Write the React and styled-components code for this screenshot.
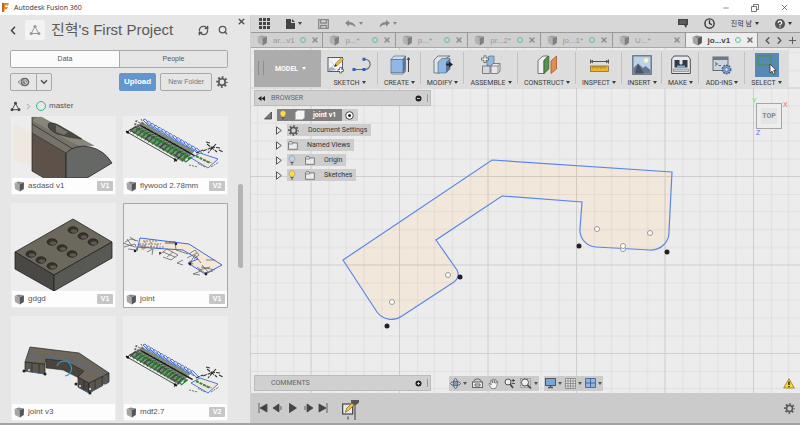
import React from "react";
import styled, { createGlobalStyle, css } from "styled-components";
import {
  RefreshCw,
  Search,
  X,
  ChevronLeft,
  ChevronRight,
  ChevronDown,
  Plus,
  Minus,
  Clock,
} from "lucide-react";

const sans = `"Liberation Sans", "Noto Sans CJK KR", sans-serif`;
const compact = `Roboto, "Noto Sans CJK KR", sans-serif`;

const GlobalStyle = createGlobalStyle`
  * { box-sizing: border-box; }
  body { margin: 0; background: #fff; font-family: ${sans}; font-size: 7px; line-height: 10px; color: #555; }
  button { font: inherit; color: inherit; background: none; border: 0; padding: 0; }
  svg { display: block; flex: none; }
  h1, ul { margin: 0; padding: 0; font-weight: normal; list-style: none; }
`;

/* ---------- frame ---------- */

const Window = styled.div`
  height: 100vh;
  display: flex;
  flex-direction: column;
  border-bottom: 2px solid #a2a2a2;
  overflow: hidden;
`;

const TitleBar = styled.header`
  flex: none;
  height: 15px;
  padding: 0 11px 0 2px;
  display: flex;
  align-items: center;
  gap: 5px;
  background: #fff;
  color: #333;
  font-family: "Open Sans", sans-serif;
`;

const WindowButtons = styled.div`
  margin-left: auto;
  display: flex;
  gap: 21px;
`;

const IconButton = styled.button`
  display: flex;
  align-items: center;
  justify-content: center;
  gap: 3px;
  color: ${(p) => p.$color || "#555"};
`;

const Main = styled.div`
  flex: 1;
  min-height: 0;
  display: flex;
`;

/* ---------- data panel ---------- */

const DataPanel = styled.aside`
  position: relative;
  flex: none;
  width: 251px;
  display: flex;
  flex-direction: column;
  background: #e6e6e6;
  border-right: 1px solid #cfcfcf;
`;

const ClosePanel = styled(IconButton)`
  position: absolute;
  top: 2px;
  right: 4px;
`;

const PanelTop = styled.div`
  flex: none;
  padding: 5px 22px 4px 10px;
  display: flex;
  flex-direction: column;
  gap: 5px;
`;

const ProjectRow = styled.div`
  height: 20px;
  display: flex;
  align-items: center;
  gap: 9px;
`;

const ProjectTile = styled.div`
  width: 20px;
  height: 20px;
  display: grid;
  place-items: center;
  background: #f3f3f3;
  border-radius: 2px;
`;

const ProjectName = styled.h1`
  flex: 1;
  margin-left: -3px;
  font-size: 15px;
  line-height: 20px;
  color: #5a5a5a;
  white-space: nowrap;
`;

const Switcher = styled.div`
  height: 18px;
  margin-top: 5px;
  display: grid;
  grid-template-columns: 1fr 1fr;
  border: 1px solid #a9a9a9;
  border-radius: 2px;
  overflow: hidden;
`;

const SwitchTab = styled.button`
  background: ${(p) => (p.$active ? "#fbfbfb" : "#e6e6e6")};
  & + & {
    border-left: 1px solid #a9a9a9;
  }
`;

const ActionRow = styled.div`
  height: 18px;
  display: flex;
  align-items: stretch;
  gap: 4px;
`;

const SplitButton = styled.div`
  width: 42px;
  margin-right: auto;
  display: grid;
  grid-template-columns: 26fr 16fr;
  border: 1px solid #a9a9a9;
  border-radius: 2px;
  & > button + button {
    border-left: 1px solid #a9a9a9;
  }
`;

const ActionButton = styled.button`
  border-radius: 2px;
  ${(p) =>
    p.$primary
      ? css`
          background: #6496cd;
          color: #fff;
          font-weight: bold;
          font-size: 8px;
          padding: 0 5px;
        `
      : css`
          border: 1px solid #a9a9a9;
          color: #777;
          padding: 0 7px;
        `}
`;

const Breadcrumb = styled.nav`
  height: 12px;
  margin-top: 4px;
  display: flex;
  align-items: center;
  gap: 3px;
  font-size: 8px;
  color: #555;
  a {
    color: inherit;
    text-decoration: none;
  }
`;

const Ring = styled.span`
  width: ${(p) => p.$size}px;
  height: ${(p) => p.$size}px;
  flex: none;
  border: 1px solid ${(p) => p.$color || "#35b896"};
  border-radius: 50%;
`;

const FileArea = styled.div`
  flex: 1;
  min-height: 0;
  padding: 0 6px 2px 11px;
  display: flex;
  justify-content: space-between;
`;

const FileGrid = styled.ul`
  flex: 1;
  margin-right: 10px;
  display: grid;
  grid-template-columns: 1fr 1fr;
  gap: 8px 7px;
  align-content: end;
  overflow: hidden;
`;

const ScrollTrack = styled.div`
  width: 6px;
  padding-top: 68px;
`;

const ScrollThumb = styled.div`
  width: 5px;
  height: 84px;
  border-radius: 3px;
  background: #b3b3b3;
`;

const Card = styled.li`
  background: #ededed;
  box-shadow: ${(p) => (p.$selected ? "inset 0 0 0 1px #85aee2" : "none")};
  border-radius: 1px;
  svg.thumb {
    width: 100%;
    height: 88px;
  }
`;

const CardFooter = styled.div`
  height: 16px;
  margin: 0 1px 1px;
  padding: 0 2px;
  display: flex;
  align-items: center;
  gap: 3px;
  background: #fdfdfd;
`;

const FileName = styled.span`
  flex: 1;
  font-size: 8px;
  white-space: nowrap;
`;

const Version = styled.button`
  width: 16px;
  height: 10px;
  border-radius: 1px;
  background: #c6c6c6;
  color: #fff;
  font-weight: bold;
`;

/* ---------- workspace ---------- */

const Workspace = styled.main`
  flex: 1;
  min-width: 0;
  display: flex;
  flex-direction: column;
  background: #ececec;
`;

const AppBar = styled.div`
  flex: none;
  height: 18px;
  padding: 0 8px;
  display: flex;
  align-items: center;
  gap: 16px;
  background: #d7d7d7;
  border-bottom: 1px solid #9b9b9b;
`;

const Spacer = styled.div`
  flex: 1;
`;

const TabBar = styled.div`
  flex: none;
  height: 15px;
  display: flex;
  background: #d0d0d0;
  border-bottom: 1px solid #a8a8a8;
`;

const DocTab = styled.div`
  flex: 1;
  min-width: 0;
  padding: 0 4px 0 6px;
  display: flex;
  align-items: center;
  gap: 5px;
  border-right: 1px solid #979797;
  font-size: 8px;
  color: ${(p) => (p.$active ? "#444" : "#999")};
  font-weight: ${(p) => (p.$active ? "bold" : "normal")};
  background: ${(p) => (p.$active ? "#ededed" : "transparent")};
  svg:first-child {
    opacity: ${(p) => (p.$active ? 1 : 0.65)};
  }
`;

const TabTitle = styled.button`
  flex: 1;
  height: 13px;
  padding-top: 2px;
  text-align: left;
`;

const TabControls = styled.div`
  width: 42px;
  padding: 0 2px 0 4px;
  display: flex;
  align-items: center;
  justify-content: space-between;
`;

const Viewport = styled.section`
  position: relative;
  flex: 1;
  min-height: 0;
  padding: 2px 0 2px 3px;
  display: flex;
  flex-direction: column;
`;

const Canvas = styled.svg`
  position: absolute;
  inset: 0;
  width: 100%;
  height: 100%;
`;

const Ribbon = styled.div`
  position: relative;
  flex: none;
  height: 38px;
  margin-right: 12px;
  display: grid;
  grid-template-columns: 67fr 57fr 43fr 43fr 54fr 58fr 46fr 40fr 37fr 46fr 43fr;
  background: #dddddd;
`;

const ModelButton = styled.button`
  position: relative;
  display: flex;
  align-items: center;
  justify-content: center;
  gap: 4px;
  margin-bottom: 1px;
  padding-left: 6px;
  background: #acacac;
  color: #fff;
  font-family: ${compact};
  font-weight: bold;
  &::before {
    content: "";
    position: absolute;
    left: 4px;
    top: 11px;
    width: 4px;
    height: 14px;
    border: solid #8d8d8d;
    border-width: 0 1px;
  }
`;

const Tool = styled.div`
  display: flex;
  flex-direction: column;
  align-items: center;
  padding-top: 3px;
  background: linear-gradient(#c2c2c2, #c2c2c2) right 2px / 1px 32px no-repeat;
  &:last-child {
    background: none;
  }
`;

const ToolIcons = styled.div`
  height: 24px;
  display: flex;
  align-items: center;
  gap: 7px;
  ${(p) => p.$active && "background: #5689b3;"}
`;

const ToolLabel = styled.button`
  display: flex;
  align-items: center;
  gap: 2px;
  height: 11px;
  font-family: ${compact};
  color: #3c3c3c;
`;

const Caret = styled.i`
  flex: none;
  border: 2px solid transparent;
  border-top: 3px solid currentColor;
  border-bottom: 0;
`;

const Stage = styled.div`
  position: relative;
  flex: 1;
  min-height: 0;
  margin-top: 2px;
  display: flex;
  justify-content: space-between;
  align-items: flex-start;
`;

const PanelBar = styled.div`
  width: 177px;
  height: 16px;
  padding: 0 2px 0 3px;
  display: flex;
  align-items: center;
  gap: 6px;
  background: #d0d0d0;
  border: 1px solid #bcbcbc;
  color: #666;
  font-family: ${compact};
  &::after {
    content: "";
    width: 2px;
    height: 8px;
    margin-left: -3px;
    border-right: 1px solid #999;
  }
`;

const PanelTitle = styled.span`
  flex: 1;
  padding-left: ${(p) => p.$indent || 0}px;
`;

const Tree = styled.ul`
  padding: 3px 0 0 10px;
  display: flex;
  flex-direction: column;
  gap: 3px;
  font-family: ${compact};
  color: #333;
`;

const TreeRow = styled.li`
  height: 12px;
  padding-left: ${(p) => (p.$root ? 0 : 11)}px;
  display: flex;
  align-items: center;
  gap: ${(p) => (p.$root ? 5 : 4)}px;
`;

const Chip = styled.div`
  height: 12px;
  display: flex;
  align-items: center;
  gap: 9px;
  padding: 0 4px 0 1px;
  background: #cdcdcd;
`;

const RootChip = styled(Chip)`
  gap: 3px;
  padding: 0 4px 0 0;
  & > div {
    height: 12px;
    padding: 0 6px 0 2px;
    display: flex;
    align-items: center;
    gap: 8px;
    background: #808080;
    color: #fff;
    font-weight: bold;
  }
`;

const CubeHolder = styled.div`
  position: relative;
  margin: 13px 18px 0 0;
`;

const Cube = styled.button`
  width: 26px;
  height: 26px;
  padding: 4px;
  border: 1px solid #a6a6a6;
  background: #e3e4e6;
  background-clip: content-box;
  box-shadow: inset 0 0 0 4px #ededed;
  color: #888;
  font-family: ${compact};
  line-height: 16px;
  font-weight: bold;
`;

const Axis = styled.span`
  position: absolute;
  color: ${(p) => p.$color};
  left: ${(p) => p.$x}px;
  top: ${(p) => p.$y}px;
`;

const BottomRow = styled.div`
  position: relative;
  flex: none;
  display: flex;
  align-items: center;
`;

const NavBar = styled.div`
  margin-left: ${(p) => p.$gap}px;
  height: 15px;
  padding: 0 1px;
  display: flex;
  align-items: center;
  gap: ${(p) => p.$between}px;
  background: #cbcbcb;
  button {
    gap: 2px;
  }
`;

const Warning = styled.div`
  margin: 0 5px 0 auto;
`;

const Timeline = styled.footer`
  flex: none;
  height: 30px;
  padding: 0 5px 0 7px;
  display: flex;
  align-items: center;
  gap: 5px;
  background: #cbcbcb;
`;

const Marker = styled.div`
  margin-left: 9px;
  margin-top: 4px;
`;

/* ---------- drawings ---------- */

const BoxIcon = () => (
  <svg width="11" height="11" viewBox="0 0 11 11">
    <path d="M0.5 2 4.5 0.5 10 1.5 5.5 3.2Z" fill="#8b8b8b" />
    <path d="M0.5 2 5.5 3.2 5.8 10.5 1 8Z" fill="#a5a5a5" />
    <path d="M5.5 3.2 10 1.5 9.8 8 5.8 10.5Z" fill="#555" />
  </svg>
);

const Gear = ({ size = 11, color = "#555" }) => (
  <svg width={size} height={size} viewBox="0 0 12 12" fill="none" stroke={color}>
    <circle cx="6" cy="6" r="4.9" strokeWidth="1.8" strokeDasharray="1.9 1.95" strokeDashoffset=".95" />
    <circle cx="6" cy="6" r="3.2" strokeWidth="1.6" />
  </svg>
);

const Nodes = ({ color = "#999", size = 12 }) => (
  <svg width={size} height={size} viewBox="0 0 12 12" fill={color}>
    <path d="M6 2.5 2.2 9.5H9.8Z" fill="none" stroke={color} strokeWidth="1" />
    <circle cx="6" cy="2.5" r="1.6" />
    <circle cx="2.2" cy="9.5" r="1.6" />
    <circle cx="9.8" cy="9.5" r="1.6" />
  </svg>
);

const Logo = () => (
  <svg width="7" height="9" viewBox="0 0 7 9">
    <path d="M0 0H7L6 2.5H3V4H6L5 6H3L2 9H0Z" fill="#f08a24" />
    <path d="M0 0H2L1.5 9H0Z" fill="#b4621b" />
  </svg>
);

const Bulb = ({ color }) => (
  <svg width="8" height="10" viewBox="0 0 8 10">
    <path d="M4 .5a3 3 0 0 1 1.7 5.4L5.5 7h-3l-.2-1.1A3 3 0 0 1 4 .5Z" fill={color} stroke="#8b8468" strokeWidth=".5" />
    <path d="M2.7 7.5h2.6M3 9h2" stroke="#555" />
  </svg>
);

const Folder = () => (
  <svg width="10" height="9" viewBox="0 0 10 9">
    <path d="M.5 8.3V1.8L1.2.7H4l.8 1.2h4.6v6.4Z" fill="#e9ebef" stroke="#666" strokeWidth=".8" />
    <path d="M.5 3H4.6L5.2 1.9" fill="none" stroke="#666" strokeWidth=".7" />
  </svg>
);

const Arrow = ({ open }) => (
  <svg width="8" height="9" viewBox="0 0 8 9">
    {open ? (
      <path d="M7.5 1V8H.5Z" fill="#777" stroke="#444" strokeWidth=".8" />
    ) : (
      <path d="M1.5 .8 6.3 4.5 1.5 8.2Z" fill="#eee" stroke="#555" />
    )}
  </svg>
);

const Dot = ({ plus }) => (
  <svg width="7" height="7" viewBox="0 0 7 7">
    <circle cx="3.5" cy="3.5" r="3" fill="#222" />
    <path d={plus ? "M2 3.5h3M3.5 2v3" : "M2 3.5h3"} stroke="#ddd" strokeWidth=".9" />
  </svg>
);

const SketchIcon = () => (
  <svg width="18" height="18" viewBox="0 0 18 18">
    <rect x="1" y="1.5" width="14.5" height="14" fill="#f1f3f7" stroke="#555a66" />
    <path d="M2 12q4-2 7 2L2 15Z" fill="#9fb2cc" />
    <path d="M3 4.5 7 9M3 12.5 7 9" stroke="#bbb" strokeWidth=".6" />
    <path d="M7.5 10.5 8.5 7.8 14.6 1.4 16.5 3.2 10.2 9.5Z" fill="#f3c23c" stroke="#7c5a22" strokeWidth=".6" />
    <path d="M7.3 10.7 8.4 8l1.7 1.7Z" fill="#333" />
    <path d="M13.7 11.3v6M10.7 14.3h6" stroke="#555" strokeWidth="2.8" />
    <path d="M13.7 12v4.6M11.4 14.3H16" stroke="#fff" strokeWidth="1.3" />
  </svg>
);

const CurveIcon = () => (
  <svg width="20" height="18" viewBox="0 0 20 18">
    <path d="M2 13.5H13A5 5 0 0 0 13 3.2" fill="none" stroke="#666" strokeWidth="1.1" />
    <path d="M.5 12h3v3h-3zM10.5 12h3v3h-3zM10.5 1.7h3v3h-3z" fill="#2d5fb5" />
  </svg>
);

const CreateIcon = () => (
  <svg width="20" height="20" viewBox="0 0 20 20">
    <path d="M1 4.5 4 1H15.5L13 4.5Z" fill="#c9def2" stroke="#58708c" strokeWidth=".7" />
    <path d="M13 4.5 15.5 1V15L13 18Z" fill="#55779f" stroke="#58708c" strokeWidth=".7" />
    <rect x="1" y="4.5" width="12" height="13" fill="#8fb9e2" stroke="#58708c" strokeWidth=".7" />
    <path d="M.8 17.5 1.8 19H13L16 16" fill="none" stroke="#888" />
    <path d="M18.5 17V3M17 5 18.5 2.6 20 5" fill="none" stroke="#444" />
  </svg>
);

const ModifyIcon = () => (
  <svg width="20" height="20" viewBox="0 0 20 20">
    <path d="M1 18V5L5 1H17L12.5 3.5 7 7V18Z" fill="#e1e3e6" stroke="#59616c" strokeWidth=".8" />
    <path d="M5 18V7L9 3.5H17V14L13 18Z" fill="#8fb9e2" stroke="#58708c" strokeWidth=".7" />
    <path d="M13 18V7L17 3.5V14Z" fill="#55779f" />
    <path d="M13 9.5H17" stroke="#222" strokeWidth="1.8" />
    <path d="M16 6.5 20 9.5 16 12.5Z" fill="#222" />
  </svg>
);

const AssembleIcon = () => (
  <svg width="20" height="20" viewBox="0 0 20 20">
    <path d="M6 3.5 8 1H13V9L11 11H6Z" fill="#8fb9e2" stroke="#58708c" strokeWidth=".7" />
    <path d="M1.5 11H9V18.5H1.5Z" fill="#d5d8dd" stroke="#666" strokeWidth=".8" />
    <path d="M10 11 12 8.5H19V16L17 18.5H10Z" fill="#e5e7ea" stroke="#666" strokeWidth=".8" />
    <path d="M17 11V18M10 11H17L19 8.5" fill="none" stroke="#777" strokeWidth=".8" />
    <path d="M4 .5V8M.3 4.2H7.8" stroke="#555" strokeWidth="2.8" />
    <path d="M4 1.3V7.2M1 4.2H7" stroke="#fff" strokeWidth="1.3" />
  </svg>
);

const ConstructIcon = () => (
  <svg width="21" height="20" viewBox="0 0 21 20">
    <path d="M1 5.5 6 1H11L7 5.5V18.5H1Z" fill="#eef0f2" stroke="#555" strokeWidth=".8" />
    <path d="M7 5.5 11.8 1V14L7 18.5Z" fill="#57924f" stroke="#3d5e38" strokeWidth=".8" />
    <path d="M14 6 19.5 1V14L14 18.5Z" fill="#e58b50" stroke="#a05c30" strokeWidth=".8" />
  </svg>
);

const InspectIcon = () => (
  <svg width="19" height="13" viewBox="0 0 19 13">
    <path d="M.5 .5V4.5M18.5 .5V4.5M1 2.5H18M3 1 1 2.5 3 4M16 1 18 2.5 16 4" fill="none" stroke="#555" />
    <rect x=".5" y="7" width="18" height="5.5" fill="#edb62d" stroke="#8b702e" strokeWidth=".8" />
    <path d="M3 7v3M5 7v2M7 7v3M9 7v2M11 7v3M13 7v2M15 7v3" stroke="#7d6428" strokeWidth=".6" />
  </svg>
);

const InsertIcon = () => (
  <svg width="20" height="20" viewBox="0 0 20 20">
    <rect x=".8" y=".8" width="18.4" height="18.4" fill="#b9d3ec" stroke="#5b6573" strokeWidth="1.2" />
    <circle cx="14" cy="5.5" r="2.2" fill="#fff5b8" />
    <path d="M1.5 18.5V13L6 8.5 11 13 13.5 11 18.5 15V18.5Z" fill="#66778b" />
    <path d="M6 8.5 12 18.5H3Z" fill="#465668" />
  </svg>
);

const MakeIcon = () => (
  <svg width="20" height="20" viewBox="0 0 20 20">
    <path d="M3 1H17L19.3 4V18.5H.7V4Z" fill="#e7e9ec" stroke="#4c5158" />
    <path d="M3.5 5H16.5V12.5H3.5Z" fill="#343a42" />
    <path d="M8.5 5H11.5V8.5L10 10 8.500 8.500Z" fill="#d5e4f5" />
    <path d="M2.5 14H17.5V16.500H2.5Z" fill="#c5c9ce" stroke="#777" strokeWidth=".6" />
    <path d="M6 10.5H14V12.5H6Z" fill="#7dabe0" />
  </svg>
);

const AddInsIcon = () => (
  <svg width="20" height="20" viewBox="0 0 20 20">
    <rect x="1" y="2" width="15" height="13.5" fill="#cdd4dd" stroke="#626b78" />
    <path d="M1 2H16V5H1Z" fill="#6e7887" />
    <path d="M3 7.5 5.5 9 3 10.5M6.5 10.5H9" fill="none" stroke="#444" strokeWidth=".8" />
    <circle cx="14.5" cy="14.5" r="4.2" fill="#7d9fce" stroke="#415b85" strokeWidth="1.5" strokeDasharray="1.7 1" />
    <circle cx="14.5" cy="14.5" r="1.7" fill="#e3e8f0" stroke="#415b85" strokeWidth=".6" />
  </svg>
);

const SelectIcon = () => (
  <svg width="24" height="24" viewBox="0 0 24 24">
    <rect x="3" y="3" width="13" height="9" fill="none" stroke="#49913d" />
    <path d="M15 11V20L17 18.2 18.3 21.3 20 20.5 18.7 17.5H21.2Z" fill="#fff" stroke="#333" strokeWidth=".8" />
  </svg>
);

/* file thumbnails */

const Thumb = ({ children }) => (
  <svg className="thumb" viewBox="0 0 105 88">
    {children}
  </svg>
);

const Wedge = () => (
  <Thumb>
    <path d="M3 33 21 43V76L3 70Z" fill="#efe8e0" />
    <path d="M21 43 55 63V88H33L21 81Z" fill="#5d5149" />
    <path d="M21 43V27Q26 26 31 28L83 56 Q66 54 55 63Z" fill="#77736a" />
    <path d="M21 34 62 59M21 43 55 63V88M21 27V81L33 88" fill="none" stroke="#222" strokeWidth=".7" />
    <path d="M31 27 84 56Q76 54 68 56L22 31Q25 26 31 27Z" fill="#89857a" />
    <path d="M38 33Q43 32 51 37 62 43 71 49 58 48 46 44 34 38 38 33Z" fill="#4a4844" stroke="#222" strokeWidth=".5" />
    <path d="M45 35 57 42 53 45 45 42Z" fill="#77736a" />
    <path d="M55 63Q64 54 79 57 93 60 101 73L76 88H55Z" fill="#666865" stroke="#222" strokeWidth=".8" />
  </Thumb>
);

const holes = [
  [62, 27], [72, 33], [82, 39],
  [41, 39], [51, 45], [61, 51],
  [20, 51], [30, 57], [41, 63],
];

const Block = () => (
  <Thumb>
    <path d="M62 16 101 39 43 72 4 49Z" fill="#6c685d" stroke="#222" strokeWidth=".8" />
    <path d="M4 49 43 72V88L4 66Z" fill="#4a4844" stroke="#222" strokeWidth=".8" />
    <path d="M101 39V55L43 88V72Z" fill="#585955" stroke="#222" strokeWidth=".8" />
    {holes.map(([x, y]) => (
      <g key={`${x}-${y}`}>
        <ellipse cx={x} cy={y} rx="5" ry="3.2" fill="#36332e" stroke="#1e1d1b" strokeWidth=".7" />
        <ellipse cx={x + 1} cy={y + 1} rx="3.2" ry="1.8" fill="#5c5950" />
      </g>
    ))}
  </Thumb>
);

const JointSketch = () => (
  <Thumb>
    <path d="M17 35 66 41 99 62 83 70 66 60 75 56 60 48 14 48Z" fill="#f3e7d8" />
    <path d="M14 48 17 35 66 41 99 62 82 71 65 60 75 56 60 47 14 44" fill="none" stroke="#3c6bdc" strokeWidth="1" />
    <g fill="none" stroke="#666" strokeWidth=".8">
      <path d="M16 41H38M18 44H42M20 38H34M22 38V46M28 39V46M34 41V47" strokeDasharray="2 1" />
      <path d="M2 39 8 36 15 38M1 44 12 41 14 47 5 46M4 36 9 43M7 34 13 38M0 40 12 44" />
      <path d="M24 49 30 46 29 52M36 52 44 46 55 52 48 57 40 54M40 49 52 54M44 54 50 49" />
      <path d="M60 57 54 60 60 62M52 39 53 47 65 51M46 39H53" />
      <path d="M66 51 72 47 76 52 71 56M67 60 72 52 78 60M83 57H92M74 64 82 70 90 68M64 55 74 50" />
      <path d="M70 71 77 72M70 71 78 68M76 67 87 64M78 64 92 67M79 62 86 70" />
    </g>
    <path d="M42 38H52V41H42ZM66 57 71 61 67 62ZM14 41 24 43 20 47Z" fill="#777" opacity=".6" />
    <g fill="#222">
      <circle cx="12" cy="48" r="1.3" />
      <circle cx="53" cy="41" r="1.2" />
      <circle cx="37" cy="50" r="1" />
      <circle cx="67" cy="61" r="1.4" />
      <circle cx="83" cy="71" r="1.4" />
    </g>
  </Thumb>
);

const JointSolid = () => (
  <Thumb>
    <path d="M35 43 54 45 73 55 68 62 52 54 35 52Z" fill="#4a443d" stroke="#222" strokeWidth=".5" />
    <path d="M14 46 34 48V58L14 55Z" fill="#5b564e" stroke="#222" strokeWidth=".7" />
    <path d="M67 61 78 67V77L67 71Z" fill="#4c4741" stroke="#222" strokeWidth=".7" />
    <path d="M78 67 98 57V66L78 77Z" fill="#5b564e" stroke="#222" strokeWidth=".7" />
    <path d="M19 31 68 37 98 57 78 67 67 61 73 55 54 45 35 43 34 48 14 46Z" fill="#6d675c" stroke="#222" strokeWidth=".7" />
    <path d="M14 46 17 40 64 45 96 61M14 55 34 58M67 71 78 77 98 66" fill="none" stroke="#506b9c" strokeWidth=".8" />
    <path d="M21 47V56M28 48V57M84 64V73M91 61V69M73 65V74" stroke="#292622" strokeWidth=".7" />
    <g fill="#222">
      <circle cx="13" cy="55" r="1.5" />
      <circle cx="34" cy="58" r="1.5" />
      <circle cx="65" cy="68" r="1.5" />
      <circle cx="79" cy="77" r="1.5" />
    </g>
    <g fill="#ddd">
      <circle cx="18" cy="54" r="1" />
      <circle cx="69" cy="70" r="1" />
      <circle cx="79" cy="73" r="1" />
      <circle cx="93" cy="69" r="1" />
    </g>
    <path d="M46 50A7.5 7.5 0 1 1 54 60" fill="none" stroke="#1f9fd0" strokeWidth="1.2" />
  </Thumb>
);

const bars = Array.from({ length: 15 }, (_, i) => i);

const Plywood = ({ step = 3.4, top = 28 }) => {
  const rise = step * 0.56;
  const run = step * 14;
  const fall = rise * 14;
  return (
    <Thumb>
      <path
        d={`M6 ${top + 11} 19 ${top + 3} ${20 + run} ${top + 3 + fall} ${8 + run} ${top + 14 + fall}Z`}
        fill="#7f8f7c"
      />
      {bars.map((i) => (
        <g key={i} transform={`translate(${i * step} ${top + i * rise})`} fill="none">
          <path d="M8 11l4-3 4 2-5 4z" stroke={i % 4 ? "#2c8436" : "#444"} strokeWidth="1.2" />
          <path d="M16 7l-4 1M7 13l7-6" stroke="#444" strokeWidth=".9" strokeDasharray="2 1" />
          <path d="M20 1l2-1 6 6-2 1z" fill="#ece6e0" stroke="#3566dd" strokeWidth=".9" />
          <path d="M17 6l5 3" stroke="#1c1c1c" strokeWidth="1.3" />
          <path d="M13 11l4-2" stroke="#1f7a2a" strokeWidth="1.5" />
        </g>
      ))}
      <path d={`M4 ${top + 13} 53 ${top + 41}M3 ${top + 14}l5-4M51 ${top + 43}l6-5`} stroke="#222" strokeWidth=".8" />
      <path d={`M3 ${top + 12}l3 1-1 1.5zM54 ${top + 42}l-3-1 1-1.5z`} fill="#111" stroke="#111" />
      <path d={`M77 ${top + 34} 95 ${top + 40} 85 ${top + 49} 68 ${top + 39}Z`} fill="#efe6dc" stroke="#3c6bdc" strokeWidth=".9" />
      <path d={`M73 ${top + 37}l14 7`} stroke="#2e8b38" strokeWidth="2" strokeDasharray="3 1" />
      <path d={`M82 ${top + 48}l-8-4M66 ${top + 46}l9 2M88 ${top + 48}l8-5M80 ${top + 41}l9 3`} stroke="#666" strokeWidth=".9" strokeDasharray="2 1" />
      <path
        d={`M80 ${top + 32}l10-4M84 ${top + 25}l10 8M93 ${top + 25}l-8 9M97 ${top + 29}l-9-1M73 ${top + 34}l7-3M96 ${top + 31}l4 2M83 ${top + 23}l4 1`}
        stroke="#333"
        strokeWidth="1.1"
        strokeDasharray="4 1"
      />
      <path d={`M12 ${top + 2}l9 3M11 ${top + 5}l7 2M18 ${top}l3 6M14 ${top + 1}l-2 6`} stroke="#555" strokeWidth=".9" strokeDasharray="2 1" />
    </Thumb>
  );
};

const files = [
  { name: "asdasd v1", version: "V1", art: <Wedge /> },
  { name: "flywood 2.78mm", version: "V2", art: <Plywood step={3.7} top={29} /> },
  { name: "gdgd", version: "V1", art: <Block /> },
  { name: "joint", version: "V1", art: <JointSketch />, selected: true },
  { name: "joint v3", art: <JointSolid /> },
  { name: "mdf2.7", version: "V2", art: <Plywood /> },
];

const docs = [
  { title: "ar...v1", ring: true },
  { title: "p...*", ring: true },
  { title: "p...*", ring: true },
  { title: "pr...2*", ring: true },
  { title: "jo...1*", ring: true },
  { title: "U...*" },
  { title: "jo...v1", ring: true, active: true },
];

const tools = [
  { label: "SKETCH", icon: <><SketchIcon /><CurveIcon /></> },
  { label: "CREATE", icon: <CreateIcon /> },
  { label: "MODIFY", icon: <ModifyIcon /> },
  { label: "ASSEMBLE", icon: <AssembleIcon /> },
  { label: "CONSTRUCT", icon: <ConstructIcon /> },
  { label: "INSPECT", icon: <InspectIcon /> },
  { label: "INSERT", icon: <InsertIcon /> },
  { label: "MAKE", icon: <MakeIcon /> },
  { label: "ADD-INS", icon: <AddInsIcon /> },
  { label: "SELECT", icon: <SelectIcon />, active: true },
];

const tree = [
  { label: "Document Settings", icons: <Gear /> },
  { label: "Named Views", icons: <Folder /> },
  { label: "Origin", icons: <><Bulb color="#b9d2f5" /><Folder /></> },
  { label: "Sketches", icons: <><Bulb color="#ffd94a" /><Folder /></> },
];

const playback = [
  ["First", "M1 0V10M9 1V9L2 5Z"],
  ["Step back", "M6 1V9L0 5ZM8 3V7"],
  ["Play", "M1.5 .5V9.5L8.5 5Z"],
  ["Step forward", "M4 1V9L10 5ZM2 3V7"],
  ["Last", "M9 0V10M1 1V9L8 5Z"],
];

const openPoints = [[141, 254], [197, 227], [346, 181], [399, 185], [372, 201], [372, 198]];
const solidPoints = [[209, 229], [136, 278], [328, 198], [416, 204]];
const minorLines = [18, 35, 53, 71];

const profile =
  "M92 212 241 112 421 124 418 183A18 18 0 0 1 399 202L345 199A17 17 0 0 1 329 181L331 154 251 148 185 192 206 222A9 9 0 0 1 203 234L151 268A18 18 0 0 1 126 264Z";

const SketchCanvas = () => (
  <Canvas aria-label="Sketch canvas">
    <defs>
      <pattern id="grid" x="59.5" y="39.5" width="88.5" height="88.5" patternUnits="userSpaceOnUse">
        {minorLines.map((n) => (
          <path key={n} d={`M${n}.5 0V88.5M0 ${n}.5H88.5`} stroke="#000" strokeOpacity=".05" />
        ))}
        <path d="M.5 0V88.5M0 .5H88.5" stroke="#000" strokeOpacity=".13" />
      </pattern>
    </defs>
    <path d={profile} fill="#f1e7db" />
    <rect width="100%" height="100%" fill="url(#grid)" />
    <path d={profile} fill="none" stroke="#5b87ea" strokeWidth="1.2" />
    {openPoints.map(([x, y]) => (
      <circle key={`${x}-${y}`} cx={x} cy={y} r="2.5" fill="#fff" stroke="#999" />
    ))}
    {solidPoints.map(([x, y]) => (
      <circle key={`${x}-${y}`} cx={x} cy={y} r="2.5" fill="#222" />
    ))}
  </Canvas>
);

export default function App() {
  return (
    <Window>
      <GlobalStyle />
      <TitleBar>
        <Logo />
        Autodesk Fusion 360
        <WindowButtons>
          <IconButton aria-label="Minimize"><Minus size={8} /></IconButton>
          <IconButton aria-label="Restore">
            <svg width="8" height="8" viewBox="0 0 8 8"><path d="M.5 2.5H5.5V7.5H.5ZM2.5 2.500V.5H7.5V5.5H5.500" fill="none" stroke="#555" strokeWidth=".8" /></svg>
          </IconButton>
          <IconButton aria-label="Close"><X size={9} /></IconButton>
        </WindowButtons>
      </TitleBar>
      <Main>
        <DataPanel>
          <ClosePanel aria-label="Close panel"><X size={9} strokeWidth={4} /></ClosePanel>
          <PanelTop>
            <ProjectRow>
              <IconButton aria-label="Back">
                <svg width="6" height="9" viewBox="0 0 6 9"><path d="M5 .8 1.5 4.5 5 8.2" fill="none" stroke="#444" strokeWidth="1.5" /></svg>
              </IconButton>
              <ProjectTile><Nodes /></ProjectTile>
              <ProjectName>진혁's First Project</ProjectName>
              <IconButton aria-label="Refresh"><RefreshCw size={11} strokeWidth={3} /></IconButton>
              <IconButton aria-label="Search"><Search size={10} strokeWidth={3} /></IconButton>
            </ProjectRow>
            <Switcher>
              <SwitchTab $active>Data</SwitchTab>
              <SwitchTab>People</SwitchTab>
            </Switcher>
            <ActionRow>
              <SplitButton>
                <IconButton aria-label="Versions">
                  <svg width="13" height="10" viewBox="0 0 13 10">
                    <path d="M6 1 1 5 6 9" fill="none" stroke="#888" strokeWidth="1" />
                    <circle cx="8" cy="5" r="4.3" fill="#666" />
                    <circle cx="8" cy="5" r="2.5" fill="none" stroke="#ddd" strokeWidth=".8" />
                    <path d="M8 3V5.5L10 6" fill="none" stroke="#fff" strokeWidth=".9" />
                  </svg>
                </IconButton>
                <IconButton aria-label="More views"><ChevronDown size={10} strokeWidth={4} /></IconButton>
              </SplitButton>
              <ActionButton $primary>Upload</ActionButton>
              <ActionButton>New Folder</ActionButton>
              <IconButton aria-label="Panel settings"><Gear size={12} /></IconButton>
            </ActionRow>
            <Breadcrumb>
              <Nodes color="#444" size={11} />
              <ChevronRight size={9} strokeWidth={3} color="#bbb" />
              <Ring $size={10} />
              <a href="#master">master</a>
            </Breadcrumb>
          </PanelTop>
          <FileArea>
            <FileGrid>
              {files.map((f) => (
                <Card key={f.name} $selected={f.selected}>
                  {f.art}
                  <CardFooter>
                    <BoxIcon />
                    <FileName>{f.name}</FileName>
                    {f.version && <Version>{f.version}</Version>}
                  </CardFooter>
                </Card>
              ))}
            </FileGrid>
            <ScrollTrack><ScrollThumb /></ScrollTrack>
          </FileArea>
        </DataPanel>

        <Workspace>
          <AppBar>
            <IconButton aria-label="Show data panel">
              <svg width="11" height="11" viewBox="0 0 11 11" fill="#444">
                {[0, 4, 8].map((y) => [0, 4, 8].map((x) => <rect key={`${x}${y}`} x={x} y={y} width="3" height="3" />))}
              </svg>
            </IconButton>
            <IconButton aria-label="File" $color="#444">
              <svg width="9" height="10" viewBox="0 0 9 10"><path d="M0 0H5V4H9V10H0ZM6 0 9 3H6Z" fill="#444" /></svg>
              <Caret />
            </IconButton>
            <IconButton aria-label="Save">
              <svg width="11" height="10" viewBox="0 0 11 10"><path d="M.7.7H10.3V9.3H.7ZM2.7.7V4H8.3V.7M2.7 9.3V6.5H8.3V9.3" fill="none" stroke="#888" strokeWidth="1.3" /></svg>
            </IconButton>
            <IconButton aria-label="Undo" $color="#888">
              <svg width="11" height="8" viewBox="0 0 11 8"><path d="M0 3 4 0V2Q10 2 10.5 7.5 8 4.5 4 4.5V6.5Z" fill="#888" /></svg>
              <Caret />
            </IconButton>
            <IconButton aria-label="Redo" $color="#888">
              <svg width="11" height="8" viewBox="0 0 11 8"><path d="M11 3 7 0V2Q1 2 .5 7.5 3 4.5 7 4.5V6.5Z" fill="#888" /></svg>
              <Caret />
            </IconButton>
            <Spacer />
            <IconButton aria-label="Comments">
              <svg width="10" height="9" viewBox="0 0 10 9"><path d="M0 0H10V6H9L8 9 6 6H0Z" fill="#444" /><path d="M1.5 2H8.5M1.5 4H8.5" stroke="#999" strokeWidth=".6" /></svg>
            </IconButton>
            <IconButton aria-label="Job status" $color="#333"><Clock size={11} strokeWidth={3} /></IconButton>
            <IconButton $color="#333">진혁 남 <Caret /></IconButton>
            <IconButton aria-label="Help" $color="#333">
              <svg width="10" height="10" viewBox="0 0 10 10">
                <circle cx="5" cy="5" r="5" fill="#555" />
                <path d="M3.3 4A1.7 1.7 0 1 1 5 5.5V6.5M5 7.3V8.5" fill="none" stroke="#fff" strokeWidth="1.1" />
              </svg>
              <Caret />
            </IconButton>
          </AppBar>
          <TabBar>
            {docs.map((d, i) => (
              <DocTab key={i} $active={d.active}>
                <BoxIcon />
                <TabTitle>{d.title}</TabTitle>
                {d.ring && <Ring $size={6} $color="#5cc2a8" />}
                <IconButton aria-label="Close tab" $color="#666"><X size={8} strokeWidth={4} /></IconButton>
              </DocTab>
            ))}
            <TabControls>
              <IconButton aria-label="Previous tab"><ChevronLeft size={11} strokeWidth={3} /></IconButton>
              <IconButton aria-label="Next tab"><ChevronRight size={11} strokeWidth={3} /></IconButton>
              <IconButton aria-label="New tab"><Plus size={11} strokeWidth={2} /></IconButton>
            </TabControls>
          </TabBar>

          <Viewport>
            <SketchCanvas />
            <Ribbon>
              <ModelButton>MODEL <Caret /></ModelButton>
              {tools.map((t) => (
                <Tool key={t.label}>
                  <ToolIcons $active={t.active}>{t.icon}</ToolIcons>
                  <ToolLabel>{t.label} <Caret /></ToolLabel>
                </Tool>
              ))}
            </Ribbon>
            <Stage>
              <div>
                <PanelBar>
                  <svg width="7" height="5" viewBox="0 0 7 5"><path d="M3.5 0V5L0 2.5ZM7 0V5L3.5 2.5Z" fill="#222" /></svg>
                  <PanelTitle>BROWSER</PanelTitle>
                  <IconButton aria-label="Collapse browser"><Dot /></IconButton>
                </PanelBar>
                <Tree>
                  <TreeRow $root>
                    <Arrow open />
                    <RootChip>
                      <div>
                        <Bulb color="#ffd94a" />
                        <svg width="10" height="10" viewBox="0 0 10 10"><path d="M.5 2.5 2.5.5H9.5V7.5L7.5 9.5H.5Z" fill="#f4f4f4" stroke="#bbb" strokeWidth=".6" /></svg>
                        joint v1
                      </div>
                      <svg width="9" height="9" viewBox="0 0 9 9"><circle cx="4.5" cy="4.5" r="3.8" fill="#fff" stroke="#333" strokeWidth=".9" /><circle cx="4.5" cy="4.5" r="1.5" fill="#222" /></svg>
                    </RootChip>
                  </TreeRow>
                  {tree.map((t) => (
                    <TreeRow key={t.label}>
                      <Arrow />
                      <Chip>{t.icons}{t.label}</Chip>
                    </TreeRow>
                  ))}
                </Tree>
              </div>
              <CubeHolder>
                <Cube>TOP</Cube>
                <Axis $color="#6be06b" $x={-4} $y={-7}>Y</Axis>
                <Axis $color="#e86a6a" $x={27} $y={-3}>X</Axis>
                <Axis $color="#6a6af0" $x={0} $y={25}>Z</Axis>
              </CubeHolder>
            </Stage>
            <BottomRow>
              <PanelBar>
                <PanelTitle $indent={13}>COMMENTS</PanelTitle>
                <IconButton aria-label="Add comment"><Dot plus /></IconButton>
              </PanelBar>
              <NavBar $gap={18} $between={5}>
                <IconButton aria-label="Orbit">
                  <svg width="11" height="11" viewBox="0 0 11 11" fill="none" stroke="#555" strokeWidth=".9"><ellipse cx="5.5" cy="5.5" rx="5" ry="2" /><ellipse cx="5.5" cy="5.5" rx="2" ry="5" /><circle cx="5.5" cy="5.5" r="1.5" fill="#5a9ade" stroke="none" /></svg>
                  <Caret />
                </IconButton>
                <IconButton aria-label="Look at">
                  <svg width="11" height="10" viewBox="0 0 11 10" fill="none" stroke="#666"><rect x=".5" y="4" width="10" height="5.5" fill="#eee" /><path d="M2 4V2.5L4 1H7L9 2.5V4M3 6H8V8H3Z" /></svg>
                </IconButton>
                <IconButton aria-label="Pan">
                  <svg width="11" height="11" viewBox="0 0 11 11"><path d="M3.5 10.5 1 6.5Q.7 5 2 5.5L3.2 7 2.5 2.5Q3 1.5 3.8 2.5L4.5 5 4.7 1Q5.5 0 6 1L6.2 5 7.2 1.5Q8 1 8.3 2L7.8 5.5 9 3.5Q10 3 10 4L8.5 8.5 7.5 10.5Z" fill="#f4f4f4" stroke="#666" strokeWidth=".7" /></svg>
                </IconButton>
                <IconButton aria-label="Zoom">
                  <svg width="11" height="11" viewBox="0 0 11 11"><circle cx="4" cy="4" r="3" fill="#e8eef5" stroke="#555" /><path d="M6 6 9 10" stroke="#444" strokeWidth="1.6" /><path d="M7.5 2.5H11M9.2.8V4.2M7.5 5.5H11" stroke="#333" strokeWidth=".8" /></svg>
                </IconButton>
                <IconButton aria-label="Zoom window">
                  <svg width="12" height="11" viewBox="0 0 12 11"><rect x=".5" y=".5" width="10" height="9" fill="none" stroke="#777" strokeDasharray="2 1" strokeWidth=".7" /><circle cx="5" cy="4.5" r="3.5" fill="#eef2f6" stroke="#555" /><path d="M7.5 7 11 10.5" stroke="#444" strokeWidth="1.6" /></svg>
                  <Caret />
                </IconButton>
              </NavBar>
              <NavBar $gap={5} $between={3}>
                <IconButton aria-label="Display settings">
                  <svg width="11" height="11" viewBox="0 0 11 11"><rect x=".5" y=".5" width="10" height="7" fill="#77a5dc" stroke="#555" /><path d="M3 9.5H8M5.5 8V9.5" stroke="#555" strokeWidth="1.5" /></svg>
                  <Caret />
                </IconButton>
                <IconButton aria-label="Grid settings">
                  <svg width="11" height="11" viewBox="0 0 11 11"><path d="M.5.5H10.5V10.5H.5ZM3 .5V10.5M5.5.5V10.5M8 .5V10.5M.5 3H10.5M.5 5.5H10.5M.5 8H10.5" fill="#e6e6e6" stroke="#777" strokeWidth=".7" /></svg>
                  <Caret />
                </IconButton>
                <IconButton aria-label="Viewports">
                  <svg width="11" height="10" viewBox="0 0 11 10"><path d="M.5.5H10.5V9.5H.5ZM5.5.5V9.5M.5 5H10.5" fill="#8db5e8" stroke="#45638c" strokeWidth=".9" /></svg>
                  <Caret />
                </IconButton>
              </NavBar>
              <Warning>
                <svg width="12" height="11" viewBox="0 0 12 11"><path d="M6 .7 11.3 10H.7Z" fill="#ffd82e" stroke="#8b7420" strokeWidth=".8" /><path d="M6 3.5V7M6 8V9.3" stroke="#111" strokeWidth="1.3" /></svg>
              </Warning>
            </BottomRow>
          </Viewport>

          <Timeline>
            {playback.map(([label, d]) => (
              <IconButton key={label} aria-label={label}>
                <svg width="10" height="10" viewBox="0 0 10 10"><path d={d} fill="#444" stroke="#444" strokeWidth=".8" /></svg>
              </IconButton>
            ))}
            <Marker>
              <svg width="18" height="20" viewBox="0 0 18 20">
                <svg y="3" width="12" height="12" viewBox="0 0 18 18">
                  <rect x="1" y="1.5" width="15" height="15" fill="#e3ebf5" stroke="#444" strokeWidth="1.8" />
                  <path d="M5 14 7 8 15 0 18 3 10 11Z" fill="#f3c23c" stroke="#7c5a22" />
                </svg>
                <path d="M9 0H17V2.5L14 5H12L9 2.5Z" fill="#555" />
                <path d="M13 3V20M6 16.5V19.5" stroke="#555" strokeWidth="1.2" />
              </svg>
            </Marker>
            <Spacer />
            <IconButton aria-label="Timeline settings"><Gear size={11} /></IconButton>
          </Timeline>
        </Workspace>
      </Main>
    </Window>
  );
}
